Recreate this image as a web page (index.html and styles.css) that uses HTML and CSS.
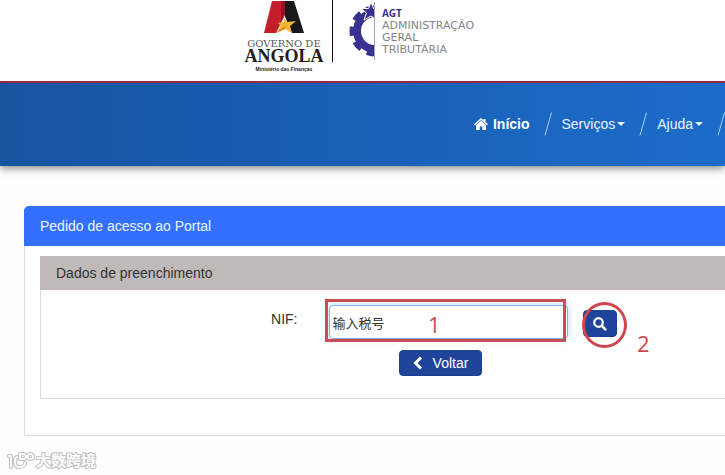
FILE: index.html
```html
<!DOCTYPE html>
<html lang="pt">
<head>
<meta charset="utf-8">
<meta name="viewport" content="width=device-width, initial-scale=1">
<title>Portal do Contribuinte</title>
<link rel="stylesheet" href="styles.css">
</head>
<body>
<header class="brand">
  <div class="gov">
    <svg class="gov-mark" width="40" height="33" viewBox="0 0 40 33" aria-hidden="true">
      <path fill="#18181a" d="M19 1H30L40 33H28L19 12Z"/>
      <path fill="#c41e2c" d="M8 1H20V17L12 33H0Z"/>
      <path fill="#8e1722" d="M17 1H21V14L17 22Z"/>
      <path fill="#f4b62c" d="M20 18L23 22L32 21L26 26L28 33L21 29L12 33L17 26L14 23L20 22Z"/>
      <path fill="#e5792a" d="M12 33L21 26V29Z"/>
    </svg>
    <span class="gov-top">GOVERNO DE</span>
    <span class="gov-name">ANGOLA</span>
    <span class="gov-dept">Ministério das Finanças</span>
  </div>
  <div class="agt">
    <svg class="gear" width="29" height="62" viewBox="0 0 29 62" aria-hidden="true">
      <clipPath id="left-half"><path d="M0 0H26V62H0Z"/></clipPath>
      <g clip-path="url(#left-half)">
        <circle cx="27" cy="31" r="18" fill="none" stroke="#39318f" stroke-width="8"/>
        <circle cx="27" cy="31" r="23" fill="none" stroke="#39318f" stroke-width="5" pathLength="36" stroke-dasharray="2.300 1.700" stroke-dashoffset="3.200"/>
        <path fill="#39318f" stroke="#fff" stroke-width="1" d="M23 2L25.500 8.500H32L27 13L29 20L23 16L16 20L18.500 13L13 8.500L20.500 8.500Z"/>
      </g>
      <path stroke="#a2a2b2" stroke-width="1" d="M26.500 2V60"/>
    </svg>
    <div class="agt-text">
      <strong>AGT</strong>
      <span>ADMINISTRAÇÃO</span>
      <span>GERAL</span>
      <span>TRIBUTÁRIA</span>
    </div>
  </div>
</header>

<nav class="nav">
  <a class="nav-link current" href="#"><svg width="14" height="12" viewBox="0 0 14 12" aria-hidden="true"><path fill="currentColor" d="M7 0L9.500 2.200V1H11.500V4L14 6.200L13 7.200L7 2L1 7.200L0 6.200ZM7 2.800L12 7.200V12H8.300V8.500H5.700V12H2V7.200Z"/></svg>Início</a>
  <svg class="slash" width="8" height="24" viewBox="0 0 8 24" aria-hidden="true"><path d="M1 23.500L7.500 .5"/></svg>
  <a class="nav-link" href="#">Serviços<i class="caret"></i></a>
  <svg class="slash" width="8" height="24" viewBox="0 0 8 24" aria-hidden="true"><path d="M1 23.500L7.500 .5"/></svg>
  <a class="nav-link" href="#">Ajuda<i class="caret"></i></a>
  <svg class="slash" width="8" height="24" viewBox="0 0 8 24" aria-hidden="true"><path d="M1 23.500L7.500 .5"/></svg>
</nav>

<main class="panel">
  <h1 class="panel-title">Pedido de acesso ao Portal</h1>
  <section class="box">
    <h2 class="box-title">Dados de preenchimento</h2>
    <form class="form">
      <div class="row">
        <label for="nif">NIF:</label>
        <div class="field">
          <input id="nif" type="text" value="输入税号">
          <div class="mark-box">1</div>
        </div>
        <div class="search">
          <button class="btn btn-search" type="button" aria-label="Pesquisar"><svg width="14" height="14" viewBox="0 0 14 14" aria-hidden="true"><circle cx="5.500" cy="5.500" r="4.300" fill="none" stroke="currentColor" stroke-width="2.200"/><path stroke="currentColor" stroke-width="2.600" stroke-linecap="round" d="M9 9L12.300 12.300"/></svg></button>
          <div class="mark-circle"></div>
          <span class="mark-two">2</span>
        </div>
      </div>
      <button class="btn btn-back" type="button"><svg width="9" height="14" viewBox="0 0 9 14" aria-hidden="true"><path fill="none" stroke="currentColor" stroke-width="3" d="M8 1.500L2.500 7L8 12.500"/></svg>Voltar</button>
    </form>
  </section>
</main>

<footer class="watermark">
  <svg width="28" height="19" viewBox="0 0 28 19" aria-hidden="true">
    <g fill="none" stroke-linecap="round" stroke-linejoin="round">
      <path stroke="#c0c0c0" stroke-width="4" d="M2 5H4V16M10 6C7 8 7 16 12 16C16 16 18 14 18 12M13 3H16C20 3 20 8 16 8H13ZM23 3C27 3 27 8 23 8C20 8 20 3 23 3Z"/>
      <path stroke="#fff" stroke-width="2" d="M2 5H4V16M10 6C7 8 7 16 12 16C16 16 18 14 18 12M13 3H16C20 3 20 8 16 8H13ZM23 3C27 3 27 8 23 8C20 8 20 3 23 3Z"/>
    </g>
  </svg>
  <span>大数跨境</span>
</footer>
</body>
</html>
```
FILE: styles.css
```css
* {
  box-sizing: border-box;
}

body {
  margin: 0;
  background: #fefefe;
  color: #333;
  font: 14px/20px "Liberation Sans", "Noto Sans CJK SC", sans-serif;
  overflow-x: hidden;
}

.brand {
  position: relative;
  z-index: 1;
  display: flex;
  justify-content: center;
  height: 81px;
  padding-right: 6px;
  background: #fff;
}

.gov {
  display: flex;
  flex-direction: column;
  align-items: center;
  width: 88px;
  height: 62px;
  padding-right: 9px;
  border-right: 1px solid #111;
  color: #1c1c1c;
  white-space: nowrap;
}

.gov-mark {
  flex: none;
  margin-bottom: 6px;
}

.gov-top {
  color: #555;
  font: 10px/10px "DejaVu Serif", serif;
}

.gov-name {
  font: bold 18px/14px "Liberation Serif", serif;
}

.gov-dept {
  margin-top: 3px;
  font: bold 5px/6px "Liberation Sans", sans-serif;
}

.agt {
  display: flex;
  gap: 5px;
  padding-left: 15px;
}

.agt-text {
  display: flex;
  flex-direction: column;
  padding-top: 7px;
  color: #858589;
  font: 11px/12px "DejaVu Sans", sans-serif;
}

.agt-text strong {
  color: #39318f;
  font: bold 10px/13px "Open Sans", sans-serif;
}

.nav {
  display: flex;
  justify-content: flex-end;
  align-items: center;
  height: 85px;
  padding-bottom: 2px;
  border-top: 2px solid #9c2543;
  background: linear-gradient(90deg, #1654a0, #1c6ccb);
  box-shadow: 0 2px 8px rgba(0, 0, 0, .5);
}

.nav-link {
  display: flex;
  align-items: center;
  color: #e9f6ff;
  text-decoration: none;
}

.current {
  gap: 5px;
  color: #fff;
  font-weight: bold;
}

.caret {
  margin-left: 2px;
  border: 4px solid transparent;
  border-top-color: currentColor;
  border-bottom: 0;
}

.slash {
  margin: 0 10px 0 14px;
  fill: none;
  stroke: #a5cdf4;
}

.slash:last-child {
  margin-right: 0;
}

.panel {
  margin: 40px 0 0 24px;
  padding-bottom: 36px;
  border: 1px solid #ddd;
  border-right: 0;
  border-top-left-radius: 5px;
  background: #fff;
}

.panel-title {
  margin: -1px 0 10px -1px;
  padding: 10px 16px;
  border-top-left-radius: 5px;
  background: #3370ff;
  color: #edf6ff;
  font: inherit;
}

.box {
  margin-left: 15px;
  border: 1px solid #ddd;
  border-right: 0;
}

.box-title {
  margin: -1px 0 0 -1px;
  padding: 7px 16px;
  background: #bfbab8;
  color: #333;
  font: inherit;
}

.form {
  padding: 15px 0 22px;
}

.row {
  display: flex;
  margin-bottom: 11px;
}

.row label {
  flex: 0 0 37.5%;
  padding-top: 4px;
  text-align: right;
}

.field {
  position: relative;
  flex: 0 0 35%;
  margin: 0 15px 0 31px;
}

.field input {
  display: block;
  width: 100%;
  height: 34px;
  padding: 1px 3px 0;
  border: 1px solid #7fb2e5;
  border-radius: 4px;
  outline: 0;
  background: #fff;
  box-shadow: 0 0 6px rgba(102, 175, 233, .5);
  color: #333;
  font: 13px/20px "Liberation Sans", "Noto Sans CJK SC", sans-serif;
}

.mark-box {
  position: absolute;
  inset: -6px 2px -3px -4px;
  padding-right: 22px;
  border: 3px solid #c94d55;
  color: #d04a4d;
  font: 22px/44px "Open Sans", sans-serif;
  text-align: center;
  pointer-events: none;
}

.search {
  position: relative;
  padding-top: 5px;
}

.btn {
  display: flex;
  align-items: center;
  justify-content: center;
  border: 1px solid #1b3f91;
  border-radius: 4px;
  background: #20449a;
  color: #fff;
  font: inherit;
}

.btn-search {
  width: 34px;
  height: 27px;
}

.btn-back {
  gap: 11px;
  width: 83px;
  height: 26px;
  margin-left: 358px;
}

.mark-circle {
  position: absolute;
  top: -3px;
  left: -1px;
  width: 45px;
  height: 46px;
  border: 3px solid #d0454e;
  border-radius: 50%;
  pointer-events: none;
}

.mark-two {
  position: absolute;
  top: 26px;
  left: 54px;
  color: #d04a4d;
  font: 22px/24px "Open Sans", sans-serif;
}

.watermark {
  display: flex;
  align-items: center;
  gap: 1px;
  margin: 14px 0 0 7px;
  color: #fff;
  font: bold 15px/20px "Noto Sans CJK SC", sans-serif;
}

.watermark span {
  -webkit-text-stroke: 2px #c0c0c0;
  paint-order: stroke fill;
}
```
